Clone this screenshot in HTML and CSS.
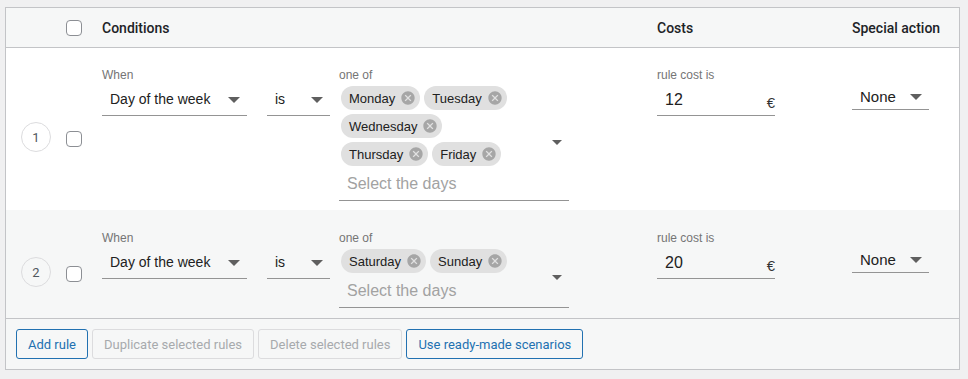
FILE: index.html
```html
<!DOCTYPE html>
<html lang="en">
<head>
  <meta charset="UTF-8" />
  <title>Shipping cost rules</title>
  <link rel="stylesheet" href="styles.css">
</head>
<body>

<div class="rules">
  <div class="rules-head">
    <div></div>
    <div><span class="cb"></span></div>
    <div>Conditions</div>
    <div>Costs</div>
    <div>Special action</div>
  </div>

  <!-- Rule 1 -->
  <div class="rule">
    <div class="rule-num">1</div>
    <span class="cb"></span>
    <div class="cond">
      <div class="field f-when">
        <div class="field-label">When</div>
        <div class="select">Day of the week</div>
      </div>
      <div class="field f-is">
        <div class="field-label">&nbsp;</div>
        <div class="select">is</div>
      </div>
      <div class="field f-days">
        <div class="field-label">one of</div>
        <div class="chips-box">
          <span class="chip">Monday<svg viewBox="0 0 24 24"><path d="M12 2C6.47 2 2 6.47 2 12s4.47 10 10 10 10-4.47 10-10S17.53 2 12 2zm5 13.590L15.59 17 12 13.41 8.41 17 7 15.59 10.59 12 7 8.41 8.41 7 12 10.59 15.59 7 17 8.41 13.41 12 17 15.59z"/></svg></span>
          <span class="chip">Tuesday<svg viewBox="0 0 24 24"><path d="M12 2C6.47 2 2 6.47 2 12s4.47 10 10 10 10-4.47 10-10S17.53 2 12 2zm5 13.59L15.59 17 12 13.41 8.41 17 7 15.59 10.59 12 7 8.41 8.41 7 12 10.59 15.59 7 17 8.41 13.41 12 17 15.59z"/></svg></span>
          <span class="chip">Wednesday<svg viewBox="0 0 24 24"><path d="M12 2C6.47 2 2 6.47 2 12s4.47 10 10 10 10-4.47 10-10S17.53 2 12 2zm5 13.59L15.59 17 12 13.41 8.41 17 7 15.59 10.59 12 7 8.41 8.41 7 12 10.59 15.59 7 17 8.41 13.41 12 17 15.59z"/></svg></span>
          <span class="chip">Thursday<svg viewBox="0 0 24 24"><path d="M12 2C6.47 2 2 6.47 2 12s4.47 10 10 10 10-4.47 10-10S17.53 2 12 2zm5 13.59L15.59 17 12 13.41 8.41 17 7 15.59 10.59 12 7 8.41 8.41 7 12 10.59 15.59 7 17 8.41 13.41 12 17 15.59z"/></svg></span>
          <span class="chip">Friday<svg viewBox="0 0 24 24"><path d="M12 2C6.47 2 2 6.47 2 12s4.47 10 10 10 10-4.47 10-10S17.53 2 12 2zm5 13.59L15.59 17 12 13.41 8.41 17 7 15.59 10.59 12 7 8.41 8.41 7 12 10.59 15.59 7 17 8.41 13.41 12 17 15.59z"/></svg></span>
          <div class="days-input">Select the days</div>
        </div>
      </div>
    </div>
    <div class="field f-cost">
      <div class="field-label">rule cost is</div>
      <div class="cost-box">
        <span class="cost-val">12</span>
        <span class="cost-unit">€</span>
      </div>
    </div>
    <div class="select action">None</div>
  </div>

  <!-- Rule 2 -->
  <div class="rule alt">
    <div class="rule-num">2</div>
    <span class="cb"></span>
    <div class="cond">
      <div class="field f-when">
        <div class="field-label">When</div>
        <div class="select">Day of the week</div>
      </div>
      <div class="field f-is">
        <div class="field-label">&nbsp;</div>
        <div class="select">is</div>
      </div>
      <div class="field f-days">
        <div class="field-label">one of</div>
        <div class="chips-box">
          <span class="chip">Saturday<svg viewBox="0 0 24 24"><path d="M12 2C6.47 2 2 6.47 2 12s4.47 10 10 10 10-4.47 10-10S17.53 2 12 2zm5 13.59L15.59 17 12 13.41 8.41 17 7 15.59 10.59 12 7 8.41 8.41 7 12 10.59 15.59 7 17 8.41 13.41 12 17 15.59z"/></svg></span>
          <span class="chip">Sunday<svg viewBox="0 0 24 24"><path d="M12 2C6.47 2 2 6.47 2 12s4.47 10 10 10 10-4.47 10-10S17.53 2 12 2zm5 13.59L15.59 17 12 13.41 8.41 17 7 15.59 10.59 12 7 8.41 8.41 7 12 10.59 15.59 7 17 8.41 13.41 12 17 15.59z"/></svg></span>
          <div class="days-input">Select the days</div>
        </div>
      </div>
    </div>
    <div class="field f-cost">
      <div class="field-label">rule cost is</div>
      <div class="cost-box">
        <span class="cost-val">20</span>
        <span class="cost-unit">€</span>
      </div>
    </div>
    <div class="select action">None</div>
  </div>

  <div class="rules-foot">
    <button class="btn">Add rule</button>
    <button class="btn" disabled>Duplicate selected rules</button>
    <button class="btn" disabled>Delete selected rules</button>
    <button class="btn">Use ready-made scenarios</button>
  </div>
</div>

</body>
</html>
```

FILE: styles.css
```css
body {
  margin: 0;
  padding: 7px 8px 0 5px;
  background: #f0f0f1;
  font-family: Roboto, "Liberation Sans", sans-serif;
  color: #1d2327;
}

.rules {
  border: 1px solid #c3c4c7;
  background: #fff;
}

.rules-head,
.rule {
  display: grid;
  grid-template-columns: 50px 46px 555px 195px 1fr;
}

.rules-head {
  height: 39px;
  align-items: center;
  background: #f6f7f7;
  border-bottom: 1px solid #c3c4c7;
  font-size: 14px;
  font-weight: 500;
}

.cb {
  display: block;
  width: 16px;
  height: 16px;
  box-sizing: border-box;
  margin-left: 10px;
  border: 1px solid #8c8f94;
  border-radius: 4px;
  background: #fff;
}

/* rule rows */
.rule {
  align-items: start;
  padding: 20px 0 9px;
  font-family: "Liberation Sans", Arial, sans-serif;
}

.rule.alt {
  padding: 21px 0 10px;
  background: #f6f7f7;
}

.rule-num {
  align-self: center;
  display: flex;
  align-items: center;
  justify-content: center;
  width: 30px;
  height: 30px;
  box-sizing: border-box;
  margin: 5px 0 0 15px;
  border: 1px solid #dcdcde;
  border-radius: 50%;
  font-family: Roboto, sans-serif;
  font-size: 13px;
  color: #50575e;
}

.rule .cb {
  align-self: center;
  margin-top: 9px;
}

.cond {
  display: flex;
  align-items: flex-start;
}

.field {
  display: flex;
  flex-direction: column;
}

.field-label {
  height: 14px;
  margin-bottom: 2px;
  font-size: 12px;
  line-height: 14px;
  color: #757575;
}

.f-when { width: 145px; margin-right: 20px; }
.f-is { width: 63px; margin-right: 9px; }
.f-days { width: 230px; }
.f-cost { width: 118px; }

.select {
  position: relative;
  height: 31px;
  padding-left: 8px;
  border-bottom: 1px solid #949494;
  font-size: 14px;
  line-height: 31px;
  color: #212121;
}

.select::after {
  content: "";
  position: absolute;
  right: 7px;
  top: 13px;
  border-left: 6px solid transparent;
  border-right: 6px solid transparent;
  border-top: 6px solid #5f5f5f;
}

.select.action {
  width: 77px;
  box-sizing: border-box;
  height: 30px;
  margin-top: 12px;
  font-size: 15px;
  line-height: 33px;
}

.select.action::after {
  top: 14px;
}

/* multi select with chips */
.chips-box {
  position: relative;
  display: flex;
  flex-wrap: wrap;
  padding-right: 56px;
  border-bottom: 1px solid #949494;
}

.chips-box::after {
  content: "";
  position: absolute;
  right: 7px;
  top: 50%;
  margin-top: -2px;
  border-left: 5px solid transparent;
  border-right: 5px solid transparent;
  border-top: 5px solid #5f5f5f;
}

.chip {
  display: inline-flex;
  align-items: center;
  height: 24px;
  margin: 2px;
  padding-left: 8px;
  border-radius: 12px;
  background: #e0e0e0;
  font-size: 13px;
  color: #212121;
}

.chip svg {
  width: 16px;
  height: 16px;
  margin: 0 4px 0 5px;
  fill: #a6a6a6;
}

.days-input {
  flex-basis: 100%;
  height: 32px;
  padding-left: 8px;
  font-size: 16px;
  line-height: 31px;
  color: #a2a2a2;
}

/* cost input */
.cost-box {
  display: flex;
  height: 31px;
  padding-left: 8px;
  border-bottom: 1px solid #949494;
}

.cost-val {
  flex: 1;
  font-size: 16px;
  line-height: 31px;
  color: #212121;
}

.cost-unit {
  align-self: flex-end;
  padding-bottom: 5px;
  font-size: 15px;
  line-height: 1;
  color: #333;
}

/* footer */
.rules-foot {
  display: flex;
  gap: 4px;
  padding: 10px 10px;
  background: #f6f7f7;
  border-top: 1px solid #c3c4c7;
}

.btn {
  height: 30px;
  padding: 0 11px;
  border: 1px solid #2271b1;
  border-radius: 3px;
  background: #f6f7f7;
  color: #2271b1;
  font-family: Roboto, sans-serif;
  font-size: 13px;
  cursor: pointer;
}

.btn:disabled {
  border-color: #dcdcde;
  color: #a7aaad;
  cursor: default;
}
```
